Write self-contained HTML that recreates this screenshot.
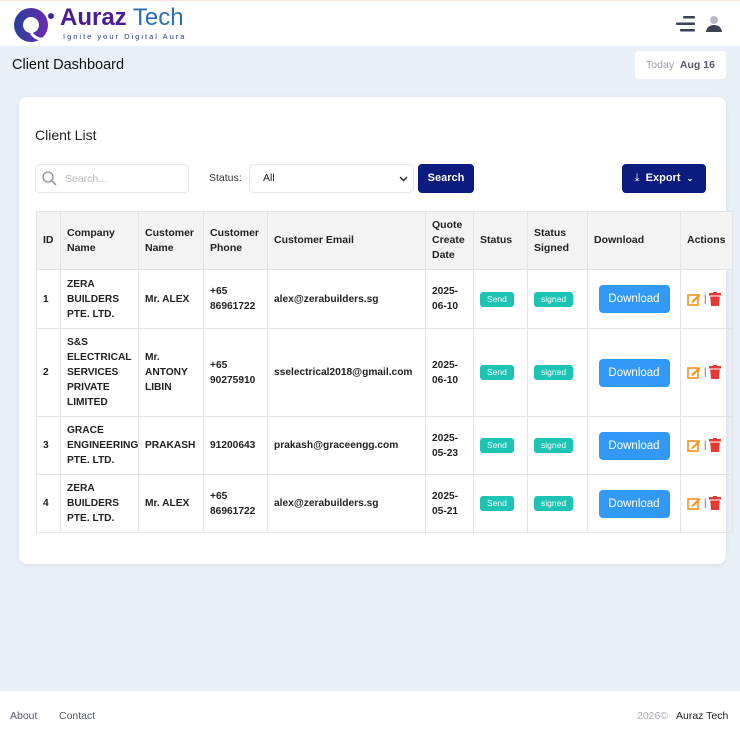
<!DOCTYPE html>
<html><head><meta charset="utf-8"><style>
*{box-sizing:border-box;margin:0;padding:0}
body{width:740px;height:740px;overflow:hidden;background:#e9eff7;font-family:"Liberation Sans",sans-serif;position:relative;color:#212529}
.hdr{position:absolute;left:0;top:0;width:740px;height:46px;background:#fff;border-top:1px solid #fbe3e0}
.abs{position:absolute}
.card{position:absolute;left:19px;top:97px;width:707px;height:467px;background:#fff;border-radius:8px;box-shadow:0 1px 4px rgba(0,0,0,.08)}
table{position:absolute;left:36px;top:211px;border-collapse:collapse;table-layout:fixed;width:696px;font-size:10.2px;font-weight:bold;color:#222}
td,th{border:1px solid #e4e4e4;padding:0 6px;vertical-align:middle;text-align:left;line-height:15px}
th{background:#f3f3f3;height:58px;font-size:10.5px}
.badge{display:inline-block;background:#1dc4b4;color:#fff;font-size:8.5px;font-weight:normal;border-radius:3px;padding:2px 7px;line-height:11px}
.dl{display:inline-block;background:#3399f7;color:#fff;font-weight:normal;font-size:11.5px;border-radius:4px;width:71px;height:28px;line-height:28px;text-align:center}
.btn{position:absolute;background:#0b1b7e;color:#fff;border-radius:4px;font-size:11px;font-weight:bold;text-align:center}
.act svg{vertical-align:middle}
</style></head><body>
<div class="hdr">
 <svg class="abs" style="left:11px;top:4px" width="46" height="40" viewBox="0 0 46 40"><defs><linearGradient id="g" x1="0" x2="1"><stop offset="0" stop-color="#2a3f9a"/><stop offset="1" stop-color="#6a2cb0"/></linearGradient></defs><circle cx="20" cy="20" r="17" fill="url(#g)"/><circle cx="20" cy="20" r="8" fill="#fff"/><path d="M20 28 Q26 36 36 34" stroke="#fff" stroke-width="3" fill="none"/><circle cx="40" cy="11" r="3" fill="#3a2a9a"/></svg>
 <div class="abs" style="left:60px;top:3px;font-size:24px;line-height:28px"><b style="color:#4a1d96">Auraz</b> <span style="color:#2a6fb0">Tech</span></div>
 <div class="abs" style="left:63px;top:31px;font-size:7.5px;letter-spacing:2px;color:#2b3a8a">Ignite your Digital Aura</div>
 <svg class="abs" style="left:674px;top:14px" width="24" height="18"><rect x="9" y="1" width="12" height="2.5" rx="1" fill="#3b4256"/><rect x="2" y="7.5" width="19" height="2.5" rx="1" fill="#3b4256"/><rect x="6" y="14" width="15" height="2.5" rx="1" fill="#3b4256"/></svg>
 <svg class="abs" style="left:705px;top:14px" width="18" height="18"><circle cx="9" cy="5" r="4" fill="#b9bcc4"/><path d="M1 17 Q2 10 9 10 Q16 10 17 17 Z" fill="#3b4256"/></svg>
</div>
<div class="abs" style="left:12px;top:57px;font-size:14.5px;color:#111">Client Dashboard</div>
<div class="abs" style="left:635px;top:51px;width:91px;height:28px;background:#fff;border-radius:4px;font-size:10.5px;line-height:28px;text-align:center"><span style="color:#9a9cab">Today</span>&nbsp; <b style="color:#555a6e">Aug 16</b></div>
<div class="card"></div>
<div class="abs" style="left:35px;top:127px;font-size:14px;color:#222">Client List</div>
<div class="abs" style="left:35px;top:164px;width:154px;height:29px;border:1px solid #e3e6ea;border-radius:5px"></div>
<svg class="abs" style="left:42px;top:171px" width="15" height="15"><circle cx="6" cy="6" r="5" stroke="#8a8f99" stroke-width="1.3" fill="none"/><path d="M10 10 L14 14" stroke="#8a8f99" stroke-width="1.3"/></svg>
<div class="abs" style="left:65px;top:173px;font-size:10.5px;color:#b5b8bf">Search...</div>
<div class="abs" style="left:209px;top:172px;font-size:10.5px;color:#333">Status:</div>
<div class="abs" style="left:249px;top:164px;width:165px;height:29px;border:1px solid #e3e6ea;border-radius:5px;font-size:10.5px;line-height:27px;padding-left:13px;color:#222">All<svg class="abs" style="right:5px;top:11px" width="9" height="6"><path d="M1 1 L4.5 4.5 L8 1" stroke="#222" stroke-width="1.4" fill="none"/></svg></div>
<div class="btn" style="left:418px;top:164px;width:56px;height:29px;line-height:29px">Search</div>
<div class="btn" style="left:622px;top:164px;width:84px;height:29px;line-height:29px"><span style="font-weight:normal">⤓</span>&nbsp; Export &nbsp;<span style="font-size:8px">⌄</span></div>
<table>
<colgroup><col style="width:24px"><col style="width:78px"><col style="width:65px"><col style="width:64px"><col style="width:158px"><col style="width:48px"><col style="width:54px"><col style="width:60px"><col style="width:93px"><col style="width:52px"></colgroup>
<tr><th>ID</th><th>Company Name</th><th>Customer Name</th><th>Customer Phone</th><th>Customer Email</th><th>Quote Create Date</th><th>Status</th><th>Status Signed</th><th>Download</th><th>Actions</th></tr>
<tr style="height:59px"><td>1</td><td>ZERA BUILDERS PTE. LTD.</td><td>Mr. ALEX</td><td>+65 86961722</td><td>alex@zerabuilders.sg</td><td>2025-06-10</td><td><span class="badge">Send</span></td><td><span class="badge">signed</span></td><td style="text-align:center"><span class="dl">Download</span></td><td class="act"><svg width="14" height="14"><rect x="1" y="3" width="10" height="10" fill="none" stroke="#f7931e" stroke-width="1.6"/><path d="M5 9 L12 2 L13.5 3.5 L6.5 10.5 L4.5 11 Z" fill="#f7931e"/></svg><span style="color:#666;font-weight:normal"> | </span><svg width="12" height="14"><rect x="0" y="1" width="12" height="2.5" fill="#e53935"/><rect x="4" y="0" width="4" height="2" fill="#e53935"/><path d="M1.2 4.5 H10.8 L10 14 H2 Z" fill="#e53935"/></svg></td></tr>
<tr style="height:88px"><td>2</td><td>S&amp;S ELECTRICAL SERVICES PRIVATE LIMITED</td><td>Mr. ANTONY LIBIN</td><td>+65 90275910</td><td>sselectrical2018@gmail.com</td><td>2025-06-10</td><td><span class="badge">Send</span></td><td><span class="badge">signed</span></td><td style="text-align:center"><span class="dl">Download</span></td><td class="act"><svg width="14" height="14"><rect x="1" y="3" width="10" height="10" fill="none" stroke="#f7931e" stroke-width="1.6"/><path d="M5 9 L12 2 L13.5 3.5 L6.5 10.5 L4.5 11 Z" fill="#f7931e"/></svg><span style="color:#666;font-weight:normal"> | </span><svg width="12" height="14"><rect x="0" y="1" width="12" height="2.5" fill="#e53935"/><rect x="4" y="0" width="4" height="2" fill="#e53935"/><path d="M1.2 4.5 H10.8 L10 14 H2 Z" fill="#e53935"/></svg></td></tr>
<tr style="height:58px"><td>3</td><td>GRACE ENGINEERING PTE. LTD.</td><td>PRAKASH</td><td>91200643</td><td>prakash@graceengg.com</td><td>2025-05-23</td><td><span class="badge">Send</span></td><td><span class="badge">signed</span></td><td style="text-align:center"><span class="dl">Download</span></td><td class="act"><svg width="14" height="14"><rect x="1" y="3" width="10" height="10" fill="none" stroke="#f7931e" stroke-width="1.6"/><path d="M5 9 L12 2 L13.5 3.5 L6.5 10.5 L4.5 11 Z" fill="#f7931e"/></svg><span style="color:#666;font-weight:normal"> | </span><svg width="12" height="14"><rect x="0" y="1" width="12" height="2.5" fill="#e53935"/><rect x="4" y="0" width="4" height="2" fill="#e53935"/><path d="M1.2 4.5 H10.8 L10 14 H2 Z" fill="#e53935"/></svg></td></tr>
<tr style="height:58px"><td>4</td><td>ZERA BUILDERS PTE. LTD.</td><td>Mr. ALEX</td><td>+65 86961722</td><td>alex@zerabuilders.sg</td><td>2025-05-21</td><td><span class="badge">Send</span></td><td><span class="badge">signed</span></td><td style="text-align:center"><span class="dl">Download</span></td><td class="act"><svg width="14" height="14"><rect x="1" y="3" width="10" height="10" fill="none" stroke="#f7931e" stroke-width="1.6"/><path d="M5 9 L12 2 L13.5 3.5 L6.5 10.5 L4.5 11 Z" fill="#f7931e"/></svg><span style="color:#666;font-weight:normal"> | </span><svg width="12" height="14"><rect x="0" y="1" width="12" height="2.5" fill="#e53935"/><rect x="4" y="0" width="4" height="2" fill="#e53935"/><path d="M1.2 4.5 H10.8 L10 14 H2 Z" fill="#e53935"/></svg></td></tr>
</table>
<div class="abs" style="left:0;top:691px;width:740px;height:49px;background:#fff"></div>
<div class="abs" style="left:10px;top:710px;font-size:10.5px;color:#555a6e">About</div>
<div class="abs" style="left:59px;top:710px;font-size:10.5px;color:#555a6e">Contact</div>
<div class="abs" style="left:637px;top:710px;font-size:10.5px;color:#a9acb8">2026©</div>
<div class="abs" style="left:676px;top:710px;font-size:10.5px;color:#222">Auraz Tech</div>
</body></html>
